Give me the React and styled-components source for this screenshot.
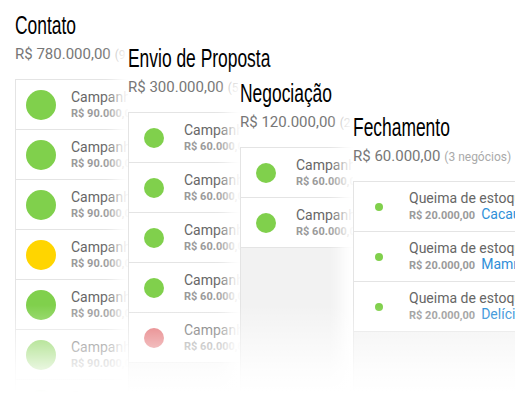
import React from "react";
import styled, { createGlobalStyle } from "styled-components";

const GlobalStyle = createGlobalStyle`
  html, body {
    margin: 0;
    padding: 0;
    background: #fff;
    font-family: Roboto, "Liberation Sans", Arial, sans-serif;
  }
`;

const COLORS = {
  green: "#80d04c",
  yellow: "#ffd500",
  red: "#e26b6e",
};

const Board = styled.main`
  position: relative;
  display: flex;
  height: 400px;
  padding-left: 15px;
  overflow: hidden;
  box-sizing: border-box;
`;

const Column = styled.section`
  position: relative;
  display: flex;
  flex-direction: column;
  flex: ${(p) => (p.$last ? "1 0 0" : `0 0 ${p.$width}px`)};
  min-width: 0;
  margin-top: ${(p) => p.$offset}px;
  background: #fff;
  box-shadow: ${(p) => (p.$first ? "none" : "-12px 0 14px 0 #fff")};
`;

const Title = styled.h2`
  margin: 0;
  height: 30px;
  font-family: "Liberation Sans", Arial, sans-serif;
  font-size: 26px;
  font-weight: 400;
  line-height: 30px;
  color: #000;
  white-space: nowrap;
  transform: scaleX(0.67);
  transform-origin: left center;
`;

const Total = styled.div`
  margin-top: 5px;
  font-size: 15px;
  line-height: 18px;
  color: #777;
  white-space: nowrap;
`;

const Count = styled.span`
  margin-left: 4px;
  font-size: 12px;
  color: #aaa;
`;

const List = styled.ul`
  flex: 1;
  width: 280px;
  margin: 15px 0 0;
  padding: 0;
  list-style: none;
  background: #f2f2f2;
  border-top: 1px solid #e4e4e4;
  border-left: 1px solid #e4e4e4;
`;

const Row = styled.li`
  display: flex;
  align-items: center;
  height: 49px;
  background: #fff;
  border-bottom: 1px solid #e4e4e4;
`;

const IconCell = styled.div`
  display: flex;
  align-items: center;
  justify-content: center;
  flex: 0 0 50px;
`;

const Dot = styled.span`
  width: ${(p) => p.$size}px;
  height: ${(p) => p.$size}px;
  border-radius: 50%;
  background: ${(p) => COLORS[p.$color]};
`;

const Info = styled.div`
  padding-left: 5px;
  white-space: nowrap;
`;

const DealName = styled.div`
  font-size: 14px;
  line-height: 17px;
  color: #666;
`;

const DealMeta = styled.div`
  display: flex;
  align-items: baseline;
  gap: 6px;
  line-height: 15px;
`;

const DealValue = styled.span`
  font-size: 11px;
  font-weight: 700;
  color: #9a9a9a;
`;

const Client = styled.span`
  font-size: 14px;
  color: #2f8fd8;
`;

const BottomFade = styled.div`
  position: absolute;
  left: 0;
  right: 0;
  bottom: 0;
  height: 95px;
  background: linear-gradient(
    to bottom,
    rgba(255, 255, 255, 0) 0%,
    rgba(255, 255, 255, 0.85) 70%,
    #fff 92%
  );
  pointer-events: none;
  z-index: 5;
`;

const stages = [
  {
    title: "Contato",
    total: "R$ 780.000,00",
    count: "(9 negócios)",
    width: 113,
    offset: 10,
    dot: 30,
    deals: ["green", "green", "green", "yellow", "green", "green", "green", "green", "yellow"].map(
      (color) => ({ name: "Campanha de Natal", value: "R$ 90.000,00", color })
    ),
  },
  {
    title: "Envio de Proposta",
    total: "R$ 300.000,00",
    count: "(5 negócios)",
    width: 112,
    offset: 43,
    dot: 20,
    deals: ["green", "green", "green", "green", "red"].map((color) => ({
      name: "Campanha de Natal",
      value: "R$ 60.000,00",
      color,
    })),
  },
  {
    title: "Negociação",
    total: "R$ 120.000,00",
    count: "(2 negócios)",
    width: 113,
    offset: 78,
    dot: 20,
    deals: ["green", "green"].map((color) => ({
      name: "Campanha de Natal",
      value: "R$ 60.000,00",
      color,
    })),
  },
  {
    title: "Fechamento",
    total: "R$ 60.000,00",
    count: "(3 negócios)",
    offset: 112,
    dot: 8,
    deals: [
      { name: "Queima de estoque", value: "R$ 20.000,00", client: "Cacau Show", color: "green" },
      { name: "Queima de estoque", value: "R$ 20.000,00", client: "Mamma Mia", color: "green" },
      { name: "Queima de estoque", value: "R$ 20.000,00", client: "Delícias da Vovó", color: "green" },
    ],
  },
];

export default function App() {
  return (
    <>
      <GlobalStyle />
      <Board>
        {stages.map((stage, i) => (
          <Column
            key={stage.title}
            $width={stage.width}
            $offset={stage.offset}
            $first={i === 0}
            $last={i === stages.length - 1}
          >
            <Title>{stage.title}</Title>
            <Total>
              {stage.total}
              <Count>{stage.count}</Count>
            </Total>
            <List>
              {stage.deals.map((deal, j) => (
                <Row key={j}>
                  <IconCell>
                    <Dot $size={stage.dot} $color={deal.color} />
                  </IconCell>
                  <Info>
                    <DealName>{deal.name}</DealName>
                    <DealMeta>
                      <DealValue>{deal.value}</DealValue>
                      {deal.client && <Client>{deal.client}</Client>}
                    </DealMeta>
                  </Info>
                </Row>
              ))}
            </List>
          </Column>
        ))}
        <BottomFade />
      </Board>
    </>
  );
}
